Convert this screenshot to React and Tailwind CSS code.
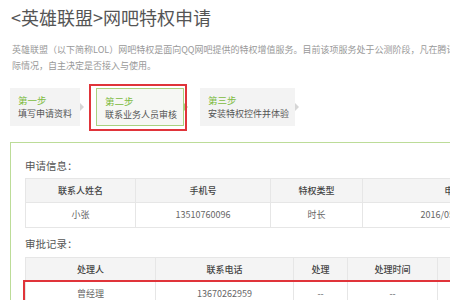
import React from 'react';

const font = { fontFamily: '"Noto Sans CJK SC", "Noto Sans", sans-serif' };

const Step = ({ label, text, active, w }) => (
  <div className="flex items-center">
    <div
      className={`h-[38px] pl-[8px] pt-[5px] ${w} ${
        active ? 'border border-[#a9d27f] bg-[#f6f7f4] pl-[7px] pt-[4px]' : 'bg-[#f3f3f3]'
      }`}
    >
      <div className="text-[9.5px] leading-[14px] text-[#7dbb3f]">{label}</div>
      <div className="text-[9px] leading-[14px] text-[#555] whitespace-nowrap">{text}</div>
    </div>
    <div
      className={`w-0 h-0 border-y-[4px] border-y-transparent border-l-[4px] ${
        active ? 'border-l-[#a9d27f]' : 'border-l-[#d6d6d6]'
      }`}
    />
  </div>
);

const Cell = ({ w, head, children }) => (
  <div
    className={`${w} shrink-0 flex items-center justify-center border-r border-[#e6e6e6] text-[9px] whitespace-nowrap ${
      head ? 'text-[#444] font-medium' : 'text-[#666]'
    }`}
  >
    {children}
  </div>
);

export default function App() {
  return (
    <div className="w-[450px] h-[300px] overflow-hidden bg-white" style={font}>
      <div className="pl-[11px] pt-[6px] text-[18px] leading-[22px] text-[#555] whitespace-nowrap">
        &lt;英雄联盟&gt;网吧特权申请
      </div>

      <div className="mt-[14px] pl-[12px] text-[9px] leading-[16px] text-[#999] whitespace-nowrap">
        <div>英雄联盟（以下简称LOL）网吧特权是面向QQ网吧提供的特权增值服务。目前该项服务处于公测阶段，凡在腾讯网吧平台的网吧业主均可根据实</div>
        <div>际情况，自主决定是否接入与使用。</div>
      </div>

      <div className="mt-[14px] pl-[10px] flex gap-[12px]">
        <Step label="第一步" text="填写申请资料" w="w-[70px]" />
        <div className="relative">
          <Step label="第二步" text="联系业务人员审核" w="w-[88px]" active />
          <div className="absolute left-[-7px] right-[1px] top-[-4px] bottom-[-5px] border-2 border-[#e0343a]" />
        </div>
        <Step label="第三步" text="安装特权控件并体验" w="w-[95px]" />
      </div>

      <div className="mt-[16px] ml-[10px] w-[700px] border-l border-t border-[#bcdc98] pl-[14px] pt-[16px]">
        <div className="text-[10.5px] leading-[14px] text-[#555]">申请信息：</div>
        <div className="mt-[5px] border-l border-t border-[#e6e6e6] w-[560px]">
          <div className="flex h-[24px] bg-[#f4f4f4] border-b border-[#e6e6e6]">
            <Cell w="w-[110px]" head>联系人姓名</Cell>
            <Cell w="w-[135px]" head>手机号</Cell>
            <Cell w="w-[92px]" head>特权类型</Cell>
            <Cell w="w-[200px]" head>申请时间</Cell>
          </div>
          <div className="flex h-[25px] border-b border-[#e6e6e6]">
            <Cell w="w-[110px]">小张</Cell>
            <Cell w="w-[135px]">13510760096</Cell>
            <Cell w="w-[92px]">时长</Cell>
            <Cell w="w-[200px]">2016/05/20 16:30:25</Cell>
          </div>
        </div>

        <div className="mt-[9px] text-[10.5px] leading-[14px] text-[#555]">审批记录：</div>
        <div className="mt-[6px] border-l border-t border-[#e6e6e6] w-[560px]">
          <div className="flex h-[24px] bg-[#f4f4f4] border-b border-[#e6e6e6]">
            <Cell w="w-[130px]" head>处理人</Cell>
            <Cell w="w-[138px]" head>联系电话</Cell>
            <Cell w="w-[54px]" head>处理</Cell>
            <Cell w="w-[90px]" head>处理时间</Cell>
            <Cell w="w-[120px]" head>备注</Cell>
          </div>
          <div className="relative flex h-[25px] border-b border-[#e6e6e6]">
            <Cell w="w-[130px]">曾经理</Cell>
            <Cell w="w-[138px]">13670262959</Cell>
            <Cell w="w-[54px]">--</Cell>
            <Cell w="w-[90px]">--</Cell>
            <Cell w="w-[120px]">--</Cell>
            <div className="absolute left-[-3px] right-0 top-[-2px] bottom-[-2px] border-2 border-[#e0343a]" />
          </div>
        </div>
      </div>
    </div>
  );
}
